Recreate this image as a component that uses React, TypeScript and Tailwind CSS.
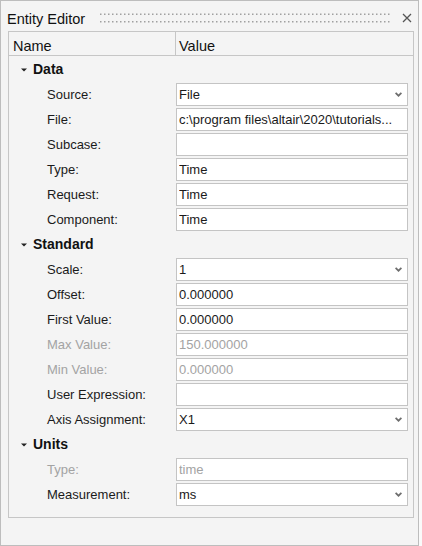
import React from "react";

type Row =
  | { kind: "section"; label: string }
  | { kind: "field"; label: string; value: string; select?: boolean; disabled?: boolean };

const rows: Row[] = [
  { kind: "section", label: "Data" },
  { kind: "field", label: "Source:", value: "File", select: true },
  { kind: "field", label: "File:", value: "c:\\program files\\altair\\2020\\tutorials..." },
  { kind: "field", label: "Subcase:", value: "" },
  { kind: "field", label: "Type:", value: "Time" },
  { kind: "field", label: "Request:", value: "Time" },
  { kind: "field", label: "Component:", value: "Time" },
  { kind: "section", label: "Standard" },
  { kind: "field", label: "Scale:", value: "1", select: true },
  { kind: "field", label: "Offset:", value: "0.000000" },
  { kind: "field", label: "First Value:", value: "0.000000" },
  { kind: "field", label: "Max Value:", value: "150.000000", disabled: true },
  { kind: "field", label: "Min Value:", value: "0.000000", disabled: true },
  { kind: "field", label: "User Expression:", value: "" },
  { kind: "field", label: "Axis Assignment:", value: "X1", select: true },
  { kind: "section", label: "Units" },
  { kind: "field", label: "Type:", value: "time", disabled: true },
  { kind: "field", label: "Measurement:", value: "ms", select: true },
];

function Chevron() {
  return (
    <svg width="7" height="5" viewBox="0 0 7 5" className="shrink-0 mr-[1px]">
      <path d="M0.6 0.8 L3.5 3.7 L6.4 0.8" fill="none" stroke="#6e6e6e" strokeWidth="1.7" />
    </svg>
  );
}

function Triangle() {
  return (
    <svg width="6" height="4" viewBox="0 0 6 4">
      <path d="M0 0.5 H6 L3 3.5 Z" fill="#222" />
    </svg>
  );
}

function Grip() {
  return (
    <svg className="h-[10px] w-full" preserveAspectRatio="none">
      <defs>
        <pattern id="grip" x="0" y="0" width="4" height="10" patternUnits="userSpaceOnUse">
          <rect x="0" y="0.5" width="1.5" height="1.5" fill="#a0a0a0" />
          <rect x="0" y="8" width="1.5" height="1.5" fill="#a0a0a0" />
        </pattern>
      </defs>
      <rect x="0" y="0" width="100%" height="10" fill="url(#grip)" />
    </svg>
  );
}

export default function App() {
  return (
    <div className="w-[422px] h-[546px] bg-[#fafafa]" style={{ fontFamily: '"Liberation Sans", Arial, sans-serif' }}>
      <div className="w-[419px] h-[546px] border border-[#bdbdbd] bg-[#f4f4f4] flex flex-col">
        {/* title bar */}
        <div className="h-[30px] flex items-center pl-[6px] pr-[6px]">
          <span className="text-[14.5px] text-[#111] leading-none pt-[7px]">Entity Editor</span>
          <div className="flex-1 ml-[15px] mr-[10px] pt-[4px] flex items-center">
            <Grip />
          </div>
          <svg width="10" height="10" viewBox="0 0 10 10" className="mt-[4px]">
            <path d="M1 1 L9 9 M9 1 L1 9" stroke="#555" strokeWidth="1.3" />
          </svg>
        </div>
        {/* table */}
        <div className="ml-[7px] w-[406px] h-[487px] border border-[#c6c6c6] flex flex-col">
          <div className="h-[24px] border-b border-[#c6c6c6] flex text-[14.5px] text-[#111]">
            <div className="w-[167px] border-r border-[#c6c6c6] pl-[4px] pt-[6px] leading-[17px]">Name</div>
            <div className="pl-[3px] pt-[6px] leading-[17px]">Value</div>
          </div>
          <div className="pt-[1px] flex flex-col">
            {rows.map((r, i) =>
              r.kind === "section" ? (
                <div key={i} className="h-[25px] flex items-center">
                  <div className="w-[19px] flex justify-end pr-[1px] pt-[1px]">
                    <Triangle />
                  </div>
                  <span className="ml-[5px] text-[14px] font-bold text-[#111]">{r.label}</span>
                </div>
              ) : (
                <div key={i} className="h-[25px] flex items-center">
                  <div
                    className={`w-[167px] pl-[38px] text-[13px] ${r.disabled ? "text-[#a3a3a3]" : "text-[#1a1a1a]"}`}
                  >
                    {r.label}
                  </div>
                  <div
                    className={`w-[232px] h-[23px] border border-[#c4c4c4] bg-white flex items-center pl-[2px] pr-[4px] text-[13px] ${
                      r.disabled ? "text-[#a3a3a3]" : "text-[#1a1a1a]"
                    }`}
                  >
                    <span className="flex-1 whitespace-nowrap overflow-hidden">{r.value}</span>
                    {r.select && <Chevron />}
                  </div>
                </div>
              )
            )}
          </div>
        </div>
      </div>
    </div>
  );
}
